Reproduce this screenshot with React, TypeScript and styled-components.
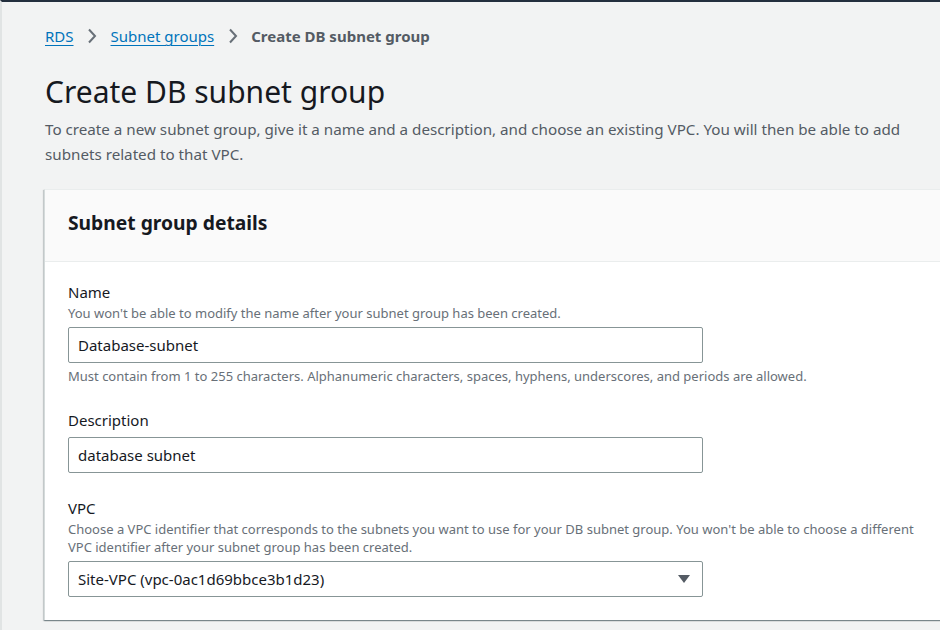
import React from "react";
import styled, { createGlobalStyle } from "styled-components";

const Global = createGlobalStyle`
  html, body { margin: 0; padding: 0; }
  body {
    background: #f2f3f3;
    font-family: "Noto Sans", "Liberation Sans", sans-serif;
    color: #16191f;
    overflow: hidden;
  }
`;

const Page = styled.div`
  width: 940px;
  height: 630px;
  box-sizing: border-box;
  border-top: 2px solid #232f3e;
  border-left: 2px solid #e1e4e4;
  background: #f2f3f3;
  padding: 23px 0 0 42px;
  overflow: hidden;
`;

const Breadcrumbs = styled.nav`
  display: flex;
  align-items: center;
  font-size: 15px;
  line-height: 22px;
  height: 22px;
  margin-left: 1px;
`;

const Crumb = styled.a`
  color: #0073bb;
  text-decoration: underline;
  text-underline-offset: 3px;
  text-decoration-thickness: 1px;
`;

const Current = styled.span`
  color: #545b64;
  font-weight: 700;
`;

const Sep = styled.span`
  display: inline-flex;
  width: 37px;
  justify-content: center;
  color: #687078;
`;

const Title = styled.h1`
  margin: 25px 1px 0;
  font-size: 30px;
  font-weight: 400;
  line-height: 40px;
  color: #16191f;
`;

const Lead = styled.p`
  margin: 5px 1px 0;
  font-size: 15.2px;
  line-height: 25px;
  color: #545b64;
  width: 880px;
`;

const Panel = styled.section`
  margin-top: 22px;
  background: #fff;
  border-top: 1px solid #eaeded;
  border-left: 1px solid #d5dbdb;
  box-shadow: 0 1px 1px 0 rgba(0, 28, 36, 0.3), 1px 1px 1px 0 rgba(0, 28, 36, 0.15), -1px 1px 1px 0 rgba(0, 28, 36, 0.15);
  width: 920px;
`;

const PanelHeader = styled.header`
  box-sizing: border-box;
  background: #fafafa;
  border-bottom: 1px solid #eaeded;
  height: 72px;
  display: flex;
  align-items: center;
  padding: 0 23px 6px;
`;

const PanelTitle = styled.h2`
  margin: 0;
  font-size: 19.25px;
  font-weight: 700;
  color: #16191f;
`;

const PanelBody = styled.div`
  padding: 18px 23px 23px;
  display: flex;
  flex-direction: column;
  gap: 23px;
`;

const Field = styled.div`
  display: flex;
  flex-direction: column;
`;

const Label = styled.label`
  font-size: 15px;
  line-height: 24px;
  color: #16191f;
`;

const Hint = styled.div<{ $after?: boolean }>`
  font-size: 13px;
  line-height: 18px;
  color: #687078;
  margin-top: ${(p) => (p.$after ? "4px" : "0")};
  width: 870px;
`;

const Input = styled.div`
  box-sizing: border-box;
  width: 635px;
  height: 36px;
  border: 1px solid #879596;
  border-radius: 2px;
  background: #fff;
  display: flex;
  align-items: center;
  padding: 0 9px;
  font-size: 15px;
  color: #16191f;
  margin-top: 5px;
`;

const Select = styled(Input)`
  justify-content: space-between;
  padding-right: 12px;
`;

const Chevron = () => (
  <svg width="10" height="16" viewBox="0 0 10 16">
    <path d="M2 1.5 L8 8 L2 14.5" fill="none" stroke="#687078" strokeWidth="2" />
  </svg>
);

const Caret = () => (
  <svg width="12" height="10" viewBox="0 0 12 10">
    <path d="M0 1 H12 L6 9 Z" fill="#545b64" />
  </svg>
);

export default function App() {
  return (
    <>
      <Global />
      <Page>
        <Breadcrumbs>
          <Crumb>RDS</Crumb>
          <Sep><Chevron /></Sep>
          <Crumb>Subnet groups</Crumb>
          <Sep><Chevron /></Sep>
          <Current>Create DB subnet group</Current>
        </Breadcrumbs>
        <Title>Create DB subnet group</Title>
        <Lead>
          To create a new subnet group, give it a name and a description, and choose an existing VPC. You will then be able to add subnets related to that VPC.
        </Lead>
        <Panel>
          <PanelHeader>
            <PanelTitle>Subnet group details</PanelTitle>
          </PanelHeader>
          <PanelBody>
            <Field>
              <Label>Name</Label>
              <Hint>You won't be able to modify the name after your subnet group has been created.</Hint>
              <Input>Database-subnet</Input>
              <Hint $after>Must contain from 1 to 255 characters. Alphanumeric characters, spaces, hyphens, underscores, and periods are allowed.</Hint>
            </Field>
            <Field>
              <Label>Description</Label>
              <Input>database subnet</Input>
            </Field>
            <Field>
              <Label>VPC</Label>
              <Hint>Choose a VPC identifier that corresponds to the subnets you want to use for your DB subnet group. You won't be able to choose a different VPC identifier after your subnet group has been created.</Hint>
              <Select>
                <span>Site-VPC (vpc-0ac1d69bbce3b1d23)</span>
                <Caret />
              </Select>
            </Field>
          </PanelBody>
        </Panel>
      </Page>
    </>
  );
}
